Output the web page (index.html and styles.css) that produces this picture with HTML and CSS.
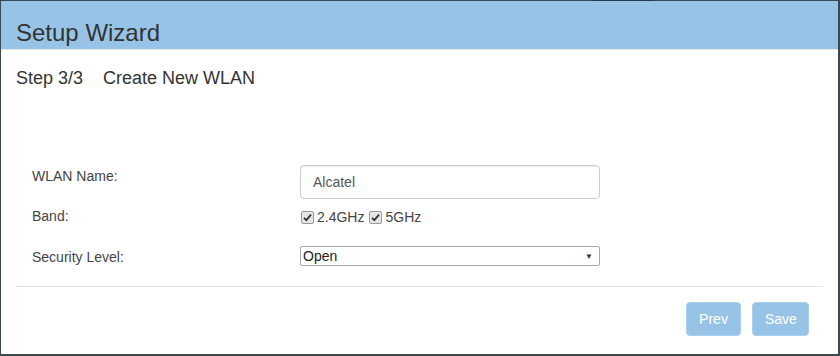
FILE: index.html
```html
<!DOCTYPE html>
<html lang="en">
    <head>
        <meta charset="UTF-8">
        <title>Setup Wizard</title>
        <link rel="stylesheet" href="styles.css">
    </head>
    <body>
        <div class="backdrop-tab"></div>

        <div class="modal">
            <div class="modal-header">
                <h3 class="modal-title">Setup Wizard</h3>
            </div>

            <div class="modal-body">
                <p class="step">
                    <span class="step-num">Step 3/3</span>
                    <span class="step-name">Create New WLAN</span>
                </p>

                <div class="form">
                    <div class="form-row row-name">
                        <label class="form-label">WLAN Name:</label>
                        <input type="text" class="form-input" value="Alcatel">
                    </div>

                    <div class="form-row row-band">
                        <label class="form-label">Band:</label>
                        <div class="checks">
                            <span class="check">
                                <svg width="13" height="13" viewBox="0 0 13 13">
                                    <rect x="0.5" y="0.5" width="12" height="12" rx="1.5" fill="#e6e6e6" stroke="#999"/>
                                    <path d="M3 6.8 L5.3 9.2 L10 3.6" fill="none" stroke="#333" stroke-width="1.8"/>
                                </svg>
                                2.4GHz
                            </span>
                            <span class="check">
                                <svg width="13" height="13" viewBox="0 0 13 13">
                                    <rect x="0.5" y="0.5" width="12" height="12" rx="1.5" fill="#e6e6e6" stroke="#999"/>
                                    <path d="M3 6.8 L5.3 9.2 L10 3.6" fill="none" stroke="#333" stroke-width="1.8"/>
                                </svg>
                                5GHz
                            </span>
                        </div>
                    </div>

                    <div class="form-row row-security">
                        <label class="form-label">Security Level:</label>
                        <div class="select">
                            <span>Open</span>
                            <span class="select-arrow">&#9660;</span>
                        </div>
                    </div>
                </div>
            </div>

            <div class="modal-footer">
                <button class="btn" disabled>Prev</button>
                <button class="btn" disabled>Save</button>
            </div>
        </div>
    </body>
</html>
```

FILE: styles.css
```css
/* Fundo escuro atrás do diálogo */
body {
    margin: 0;
    padding: 1px 2px 2px 1px;
    background: #3b4950;
    font-family: "Liberation Sans", Arial, sans-serif;
    color: #333;
    position: relative;
}

.backdrop-tab {
    position: absolute;
    top: 0;
    left: 592px;
    width: 62px;
    height: 1px;
    background: #1f3a55;
}

/* Diálogo */
.modal {
    background: #fff;
    height: 353px;
    display: flex;
    flex-direction: column;
}

.modal-header {
    background: #97c4e6;
    height: 49px;
    box-sizing: border-box;
    padding: 18px 15px 0;
    border-bottom: 1px solid #e5e5e5;
}

.modal-title {
    margin: 0;
    font-size: 24px;
    font-weight: normal;
    line-height: 27px;
    color: #333;
}

.modal-body {
    padding: 0 15px;
}

.step {
    margin: 18px 0 0;
    font-size: 18px;
    line-height: 21px;
}

.step-num {
    margin-right: 15px;
}

/* Formulário */
.form {
    margin-top: 76px;
    padding-left: 16px;
    padding-bottom: 19px;
    border-bottom: 1px solid #e5e5e5;
}

.form-row {
    display: flex;
    align-items: flex-start;
}

.row-name {
    margin-bottom: 6px;
}

.row-band {
    margin-bottom: 19px;
}

.form-label {
    width: 268px;
    padding-top: 1px;
    font-size: 14px;
    line-height: 20px;
    color: #444;
}

.form-input {
    width: 300px;
    height: 34px;
    box-sizing: border-box;
    margin: 0;
    padding: 6px 12px;
    border: 1px solid #ccc;
    border-radius: 4px;
    font-family: inherit;
    font-size: 14px;
    color: #555;
    box-shadow: inset 0 1px 1px rgba(0, 0, 0, 0.075);
}

.checks {
    display: flex;
    align-items: center;
    height: 20px;
    padding-top: 2px;
    font-size: 14px;
    color: #444;
}

.check {
    display: flex;
    align-items: center;
    gap: 3px;
    margin-left: 1px;
    margin-right: 4px;
}

.select {
    width: 300px;
    height: 20px;
    box-sizing: border-box;
    padding: 0 6px 0 2px;
    border: 1px solid #a9a9a9;
    border-radius: 2px;
    display: flex;
    align-items: center;
    justify-content: space-between;
    font-size: 14px;
    color: #222;
}

.select-arrow {
    font-size: 8px;
    color: #333;
}

/* Botões */
.modal-footer {
    display: flex;
    justify-content: flex-end;
    gap: 11px;
    padding: 15px 29px 0 15px;
}

.btn {
    height: 34px;
    padding: 6px 12px;
    border: 1px solid #a9d0ee;
    border-radius: 4px;
    background: #97c4e6;
    color: #fff;
    font-family: inherit;
    font-size: 14px;
}

.btn:first-child {
    width: 55px;
}

.btn:last-child {
    width: 57px;
}
```
